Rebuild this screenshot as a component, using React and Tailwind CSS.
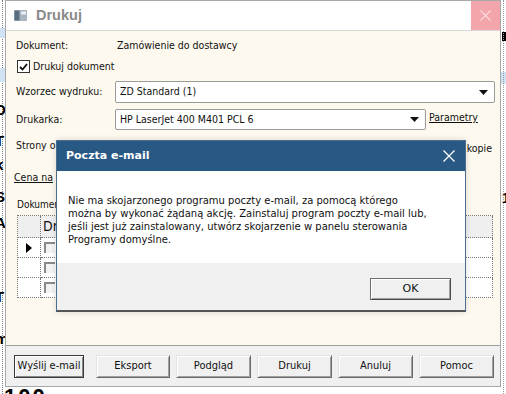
import React from "react";

const ui = { fontFamily: "'DejaVu Sans Condensed', 'Liberation Sans', sans-serif" };
const dlg = { fontFamily: "'DejaVu Sans', 'Liberation Sans', sans-serif" };

function ComboArrow() {
  return (
    <svg width="9" height="5" viewBox="0 0 9 5" className="shrink-0">
      <path d="M0 0 H9 L4.5 5 Z" fill="#111" />
    </svg>
  );
}

function Btn({ children, def, w = "w-[75px]" }) {
  return (
    <div
      className={
        "flex h-[23px] items-center justify-center bg-[#f0f0f0] text-[11px] text-[#111] " +
        w +
        " " +
        (def
          ? "border border-[#3a3a3a] shadow-[inset_1px_1px_0_#fff,inset_-1px_-1px_0_#8a8a8a]"
          : "border border-t-[#e3e3e3] border-l-[#e3e3e3] border-r-[#6a6a6a] border-b-[#6a6a6a] shadow-[inset_1px_1px_0_#fff,inset_-1px_-1px_0_#a0a0a0]")
      }
    >
      {children}
    </div>
  );
}

function SmallBox() {
  return (
    <div className="h-[11px] w-[11px] border-t-2 border-l-2 border-t-[#8a8a8a] border-l-[#8a8a8a] bg-[#f3f3f3]" />
  );
}

export default function App() {
  return (
    <div className="relative h-[394px] w-[506px] overflow-hidden bg-white" style={ui}>
      {/* background application fragments */}
      <div className="absolute left-[2px] top-0 h-full border-l border-dotted border-[#777]" />
      <div className="absolute left-0 top-[28px] h-[10px] w-[5px] bg-[#cfe3f5]" />
      <div className="absolute left-0 top-[68px] h-[14px] w-[5px] bg-[#cfe3f5]" />
      {[
        [102, "D"],
        [133, "T"],
        [157, "k"],
        [189, "S"],
        [215, "A"],
        [289, "T"],
        [331, "m"],
      ].map(([t, ch]) => (
        <div
          key={t}
          className="absolute left-[-5px] text-[15px] font-bold leading-[15px] text-black"
          style={{ top: t, fontFamily: "'Liberation Sans', sans-serif" }}
        >
          {ch}
        </div>
      ))}
      <div className="absolute right-0 top-[32px] h-[9px] w-[4px] bg-black" />
      <div className="absolute right-0 top-[72px] h-[12px] w-[5px] bg-[#cfe3f5]" />
      <div
        className="absolute right-[-4px] top-[190px] text-[15px] font-bold leading-[15px] text-black"
        style={{ fontFamily: "'Liberation Sans', sans-serif" }}
      >
        1
      </div>
      <div className="absolute right-[2px] top-0 h-full border-l border-dotted border-[#999]" />
      <div
        className="absolute left-[4px] top-[386px] text-[22px] font-bold leading-[22px] tracking-[2px] text-black"
        style={{ fontFamily: "'Liberation Sans', sans-serif" }}
      >
        100
      </div>

      {/* main window */}
      <div className="absolute left-[5px] top-0 flex h-[387px] w-[496px] flex-col border border-[#a8a8a8] bg-[#fdf9ef]">
        {/* title bar */}
        <div className="relative flex h-[30px] shrink-0 items-center border-b border-[#d9d9d9] bg-white">
          <svg width="13" height="11" viewBox="0 0 13 11" className="ml-[8px]">
            <rect x="0" y="0" width="13" height="11" fill="#a9b6c2" />
            <rect x="0.5" y="0.5" width="5" height="10" fill="#5a6e80" />
            <rect x="7" y="1.5" width="5" height="3" fill="#e8eef3" />
          </svg>
          <span
            className="ml-[9px] text-[14.5px] font-bold text-[#8a8a8a]"
            style={{ fontFamily: "'Liberation Sans', sans-serif" }}
          >
            Drukuj
          </span>
          <div className="absolute right-0 top-0 flex h-[29px] w-[29px] items-center justify-center bg-[#f2a5ab]">
            <svg width="11" height="11" viewBox="0 0 11 11">
              <path d="M0.5 0.5 L10.5 10.5 M10.5 0.5 L0.5 10.5" stroke="#fbd9dc" strokeWidth="1.2" />
            </svg>
          </div>
        </div>

        {/* body */}
        <div className="flex flex-1 flex-col pl-[10px] pr-[5px] text-[10.5px] text-[#111]">
          <div className="mt-[6px] flex h-[17px] items-center">
            <span className="w-[101px]">Dokument:</span>
            <span>Zamówienie do dostawcy</span>
          </div>
          <div className="mt-[5px] flex h-[15px] items-center">
            <div className="ml-[1px] flex h-[13px] w-[13px] items-center justify-center border border-[#333] bg-white">
              <svg width="9" height="8" viewBox="0 0 9 8">
                <path d="M1 4 L3.5 6.5 L8 1.2" fill="none" stroke="#111" strokeWidth="1.8" />
              </svg>
            </div>
            <span className="ml-[3px]">Drukuj dokument</span>
          </div>
          <div className="mt-[7px] flex h-[22px] items-center">
            <span className="w-[99px]">Wzorzec wydruku:</span>
            <div className="flex h-[22px] flex-1 items-center rounded-[2px] border border-[#9a9a9a] bg-white pl-[4px] pr-[6px]">
              <span className="flex-1">ZD Standard (1)</span>
              <ComboArrow />
            </div>
          </div>
          <div className="mt-[6px] flex h-[21px] items-center">
            <span className="w-[99px]">Drukarka:</span>
            <div className="flex h-[21px] w-[311px] items-center rounded-[2px] border border-[#9a9a9a] bg-white pl-[4px] pr-[6px]">
              <span className="flex-1">HP LaserJet 400 M401 PCL 6</span>
              <ComboArrow />
            </div>
            <span className="ml-[3px] -mt-[3px] underline">Parametry</span>
          </div>
          <div className="mt-[8px] flex h-[16px] items-center">
            <span className="flex-1">Strony o</span>
            <span className="mr-[3px] mt-[6px]">kopie</span>
          </div>
          <div className="mt-[16px] flex h-[16px] items-center">
            <span className="-ml-[2px] underline">Cena na</span>
          </div>
          <div className="mt-[10px] flex h-[16px] items-center text-[10px]">
            <span className="ml-[1px]">Dokumen</span>
          </div>
          {/* table */}
          <div className="ml-[1px] mt-[3px] w-[476px] border-l border-t border-dotted border-[#777]">
            <div className="flex h-[22px] bg-[#efefef]">
              <div className="w-[23px] border-b border-r border-dotted border-[#777]" />
              <div className="flex flex-1 items-center border-b border-r border-dotted border-[#777] pl-[2px] text-[14px]">
                Dr
              </div>
            </div>
            {[0, 1, 2].map((i) => (
              <div key={i} className="flex h-[20px] bg-white">
                <div className="flex w-[23px] items-center justify-center border-b border-r border-dotted border-[#777]">
                  {i === 0 && (
                    <svg width="6" height="10" viewBox="0 0 6 10">
                      <path d="M0 0 L6 5 L0 10 Z" fill="#000" />
                    </svg>
                  )}
                </div>
                <div className="flex flex-1 items-center border-b border-r border-dotted border-[#777] pl-[3px]">
                  <SmallBox />
                </div>
              </div>
            ))}
          </div>
        </div>

        {/* button bar */}
        <div className="flex h-[41px] shrink-0 items-center gap-[6px] border-t border-[#a0a0a0] bg-[#f0f0f0] pl-[8px]">
          <div className="mr-[6px]">
            <Btn def w="w-[70px]">Wyślij e-mail</Btn>
          </div>
          <Btn w="w-[74px]">Eksport</Btn>
          <Btn>Podgląd</Btn>
          <Btn>Drukuj</Btn>
          <Btn>Anuluj</Btn>
          <Btn>Pomoc</Btn>
        </div>
      </div>

      {/* modal dialog */}
      <div className="absolute left-[56px] top-[140px] flex h-[172px] w-[410px] flex-col border border-[#4b6f91] border-b-[#555] border-b-2 bg-white shadow-[0_0_6px_rgba(0,0,0,0.15)]" style={dlg}>
        <div className="flex h-[30px] shrink-0 items-center justify-between bg-[#285884] pl-[9px] pr-[10px]">
          <span className="text-[11px] font-bold text-white">Poczta e-mail</span>
          <svg width="12" height="12" viewBox="0 0 12 12">
            <path d="M0.5 0.5 L11.5 11.5 M11.5 0.5 L0.5 11.5" stroke="#fff" strokeWidth="1.3" />
          </svg>
        </div>
        <div className="h-[92px] shrink-0 bg-white pl-[11px] pt-[23px] text-[10px] leading-[13px] text-[#111]">
          <div>Nie ma skojarzonego programu poczty e-mail, za pomocą którego</div>
          <div>można by wykonać żądaną akcję. Zainstaluj program poczty e-mail lub,</div>
          <div>jeśli jest już zainstalowany, utwórz skojarzenie w panelu sterowania</div>
          <div>Programy domyślne.</div>
        </div>
        <div className="flex flex-1 items-start justify-end bg-[#f0f0f0] pr-[14px] pt-[15px]">
          <div className="flex h-[22px] w-[81px] items-center justify-center border border-[#707070] border-b-[#4a4a4a] border-r-[#4a4a4a] bg-[#f0f0f0] text-[11px] text-[#111] shadow-[inset_1px_1px_0_#fff,inset_-1px_-1px_0_#a0a0a0]">
            OK
          </div>
        </div>
      </div>
    </div>
  );
}
